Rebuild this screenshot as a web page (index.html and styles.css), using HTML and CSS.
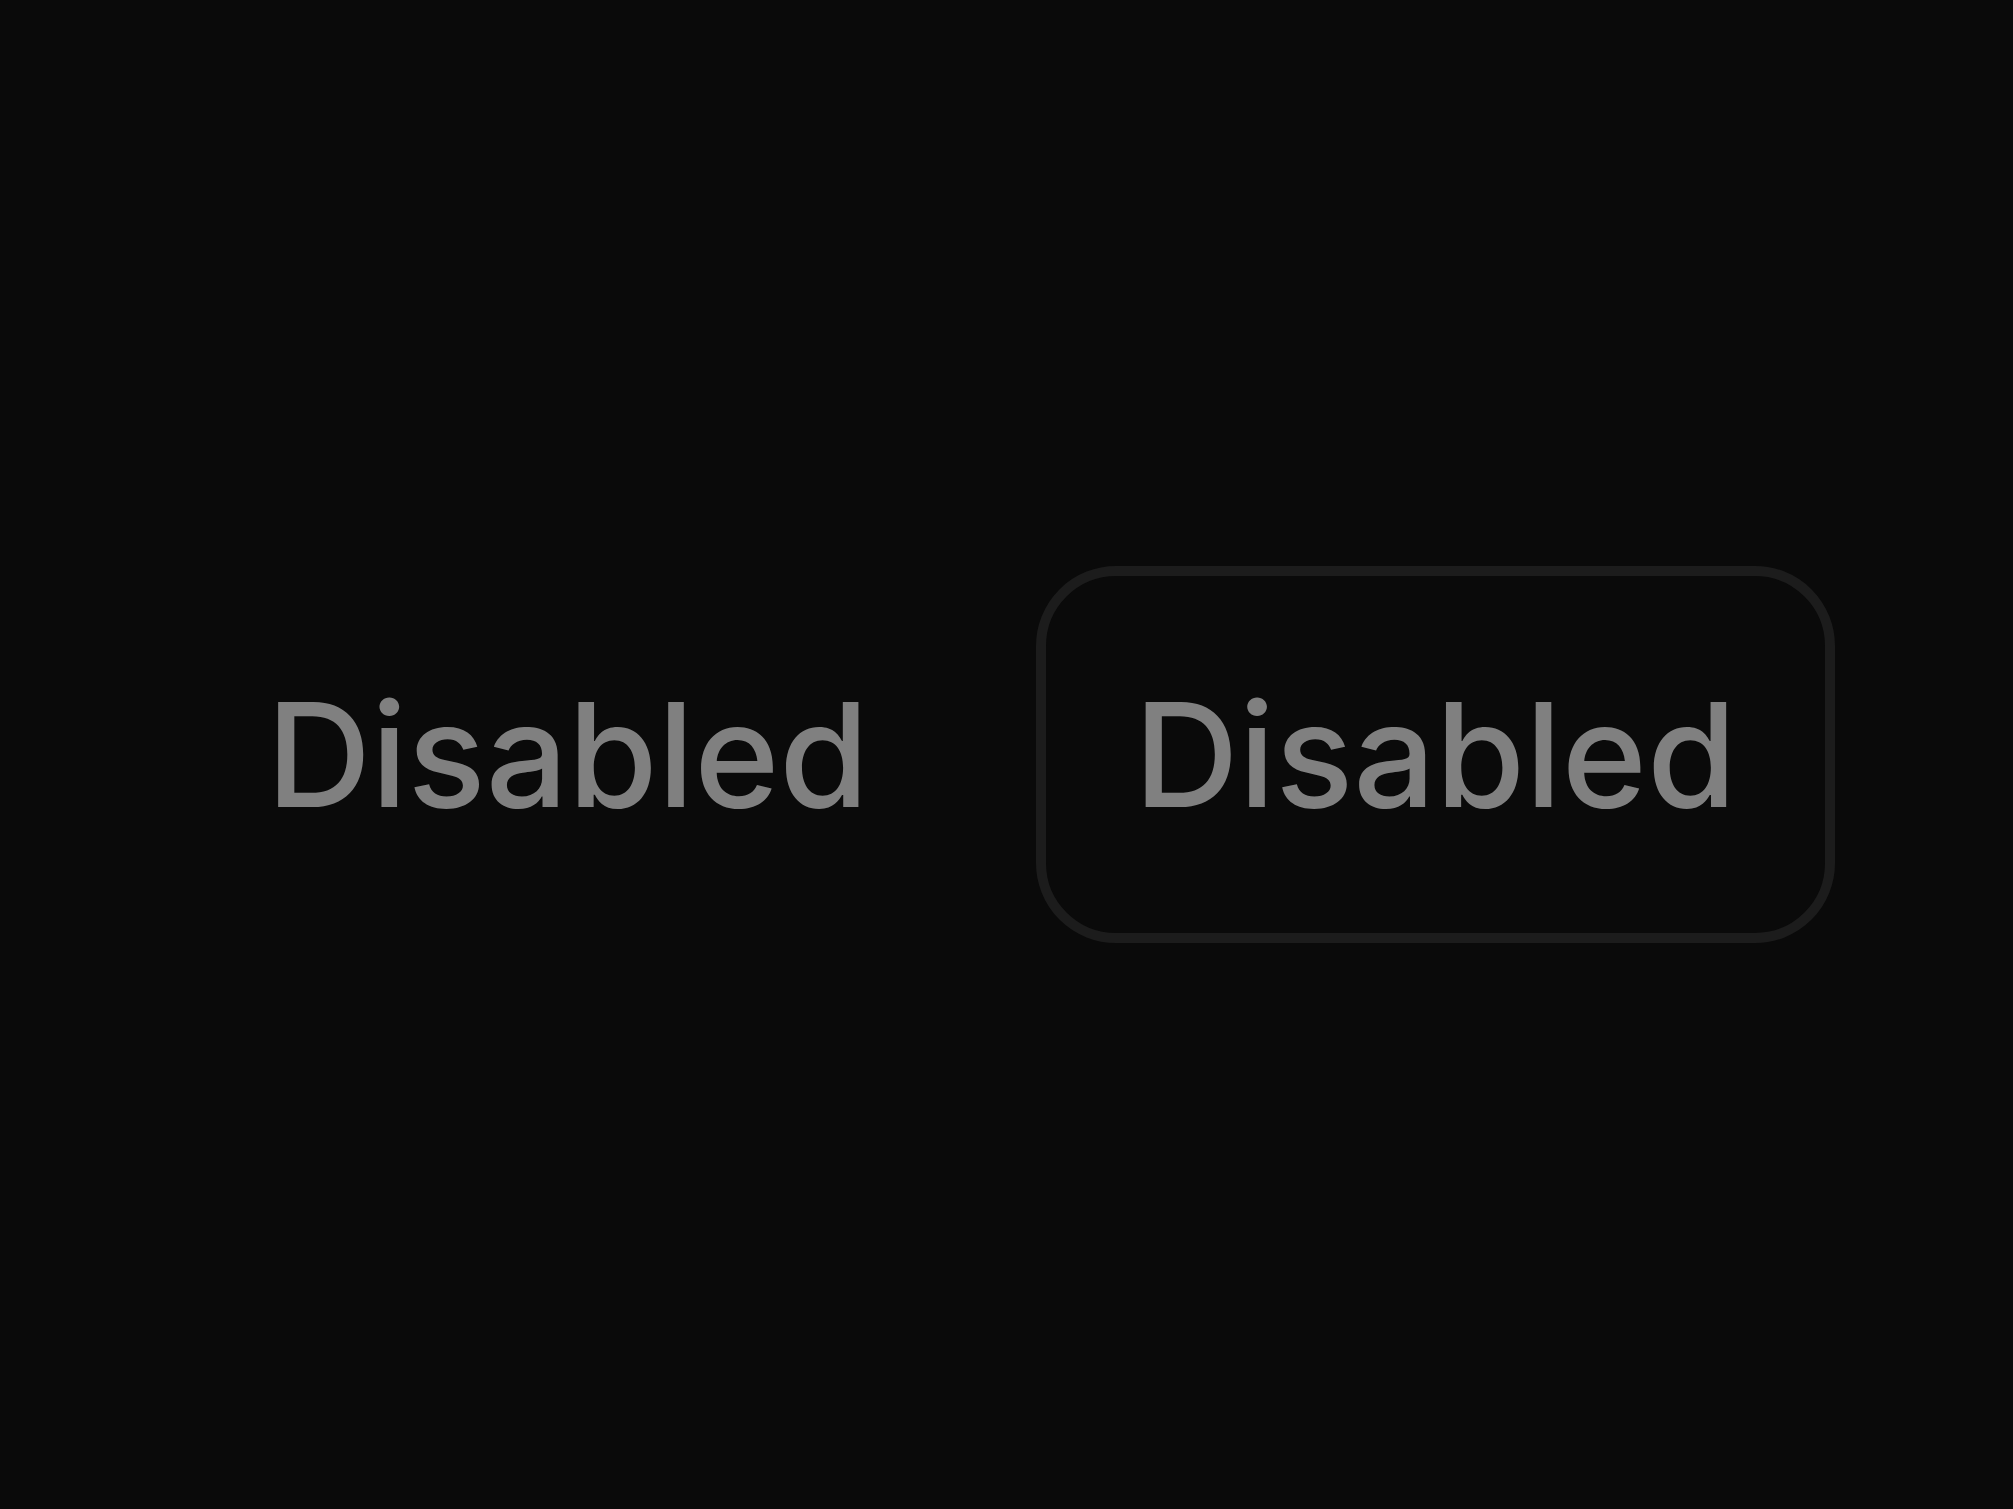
FILE: index.html
```html
<!DOCTYPE html>
<html lang="en">
<head>
<meta charset="utf-8">
<title>Disabled buttons</title>
<link rel="stylesheet" href="styles.css">
</head>
<body>
<main class="stage">
  <button class="btn btn-ghost" disabled>Disabled</button>
  <button class="btn btn-outline" disabled>Disabled</button>
</main>
</body>
</html>
```
FILE: styles.css
```css
html, body {
  margin: 0;
  padding: 0;
  background: #0a0a0a;
}
.stage {
  height: 100vh;
  display: flex;
  align-items: center;
  justify-content: center;
  gap: 79px;
}
.btn {
  box-sizing: border-box;
  height: 358px;
  padding: 0 88px;
  border: 0;
  border-radius: 80px;
  background: transparent;
  color: #808080;
  font-family: Inter, "Noto Sans", sans-serif;
  font-size: 145px;
  font-weight: 500;
  line-height: 1;
  display: inline-flex;
  align-items: center;
  justify-content: center;
  cursor: not-allowed;
}
.btn-outline {
  height: 377px;
  border: 10px solid #1c1c1c;
}
```
